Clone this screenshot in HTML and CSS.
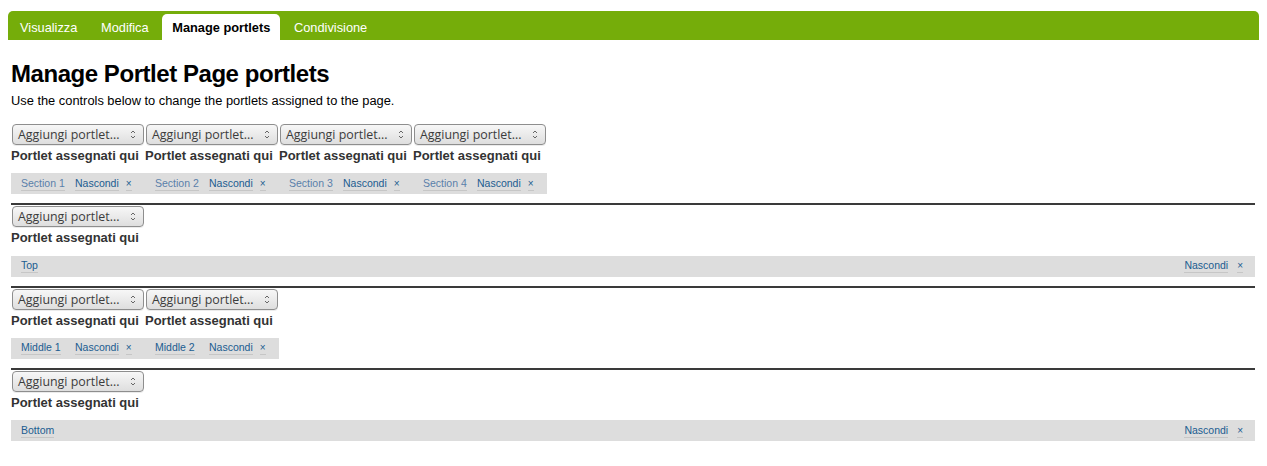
FILE: index.html
```html
<!DOCTYPE html>
<html lang="it">
<head>
<meta charset="utf-8">
<title>Manage portlets</title>
<link rel="stylesheet" href="styles.css">
</head>
<body>
<nav class="tabs">
  <a class="tab">Visualizza</a>
  <a class="tab">Modifica</a>
  <a class="tab active">Manage portlets</a>
  <a class="tab">Condivisione</a>
</nav>
<main class="content">
  <h1 class="title">Manage Portlet Page portlets</h1>
  <p class="desc">Use the controls below to change the portlets assigned to the page.</p>

  <section class="block">
    <div class="cols">
      <div class="col">
        <div class="select"><span>Aggiungi portlet...</span><svg class="arr" width="6" height="11" viewBox="0 0 6 11"><path d="M1 4 L3 2 L5 4" fill="none" stroke="#666" stroke-width="1"/><path d="M1 7 L3 9 L5 7" fill="none" stroke="#666" stroke-width="1"/></svg></div>
        <h4 class="lbl">Portlet assegnati qui</h4>
        <div class="bar"><span class="cell"><a class="name dim">Section 1</a></span><a class="act">Nascondi</a><a class="x">×</a></div>
      </div>
      <div class="col">
        <div class="select"><span>Aggiungi portlet...</span><svg class="arr" width="6" height="11" viewBox="0 0 6 11"><path d="M1 4 L3 2 L5 4" fill="none" stroke="#666" stroke-width="1"/><path d="M1 7 L3 9 L5 7" fill="none" stroke="#666" stroke-width="1"/></svg></div>
        <h4 class="lbl">Portlet assegnati qui</h4>
        <div class="bar"><span class="cell"><a class="name dim">Section 2</a></span><a class="act">Nascondi</a><a class="x">×</a></div>
      </div>
      <div class="col">
        <div class="select"><span>Aggiungi portlet...</span><svg class="arr" width="6" height="11" viewBox="0 0 6 11"><path d="M1 4 L3 2 L5 4" fill="none" stroke="#666" stroke-width="1"/><path d="M1 7 L3 9 L5 7" fill="none" stroke="#666" stroke-width="1"/></svg></div>
        <h4 class="lbl">Portlet assegnati qui</h4>
        <div class="bar"><span class="cell"><a class="name dim">Section 3</a></span><a class="act">Nascondi</a><a class="x">×</a></div>
      </div>
      <div class="col">
        <div class="select"><span>Aggiungi portlet...</span><svg class="arr" width="6" height="11" viewBox="0 0 6 11"><path d="M1 4 L3 2 L5 4" fill="none" stroke="#666" stroke-width="1"/><path d="M1 7 L3 9 L5 7" fill="none" stroke="#666" stroke-width="1"/></svg></div>
        <h4 class="lbl">Portlet assegnati qui</h4>
        <div class="bar"><span class="cell"><a class="name dim">Section 4</a></span><a class="act">Nascondi</a><a class="x">×</a></div>
      </div>
    </div>
  </section>

  <section class="block">
    <div class="col wide">
      <div class="select"><span>Aggiungi portlet...</span><svg class="arr" width="6" height="11" viewBox="0 0 6 11"><path d="M1 4 L3 2 L5 4" fill="none" stroke="#666" stroke-width="1"/><path d="M1 7 L3 9 L5 7" fill="none" stroke="#666" stroke-width="1"/></svg></div>
      <h4 class="lbl">Portlet assegnati qui</h4>
      <div class="bar full"><a class="name">Top</a><span class="spacer"></span><a class="act">Nascondi</a><a class="x">×</a></div>
    </div>
  </section>

  <section class="block">
    <div class="cols">
      <div class="col">
        <div class="select"><span>Aggiungi portlet...</span><svg class="arr" width="6" height="11" viewBox="0 0 6 11"><path d="M1 4 L3 2 L5 4" fill="none" stroke="#666" stroke-width="1"/><path d="M1 7 L3 9 L5 7" fill="none" stroke="#666" stroke-width="1"/></svg></div>
        <h4 class="lbl">Portlet assegnati qui</h4>
        <div class="bar"><span class="cell"><a class="name">Middle 1</a></span><a class="act">Nascondi</a><a class="x">×</a></div>
      </div>
      <div class="col">
        <div class="select"><span>Aggiungi portlet...</span><svg class="arr" width="6" height="11" viewBox="0 0 6 11"><path d="M1 4 L3 2 L5 4" fill="none" stroke="#666" stroke-width="1"/><path d="M1 7 L3 9 L5 7" fill="none" stroke="#666" stroke-width="1"/></svg></div>
        <h4 class="lbl">Portlet assegnati qui</h4>
        <div class="bar"><span class="cell"><a class="name">Middle 2</a></span><a class="act">Nascondi</a><a class="x">×</a></div>
      </div>
    </div>
  </section>

  <section class="block last">
    <div class="col wide">
      <div class="select"><span>Aggiungi portlet...</span><svg class="arr" width="6" height="11" viewBox="0 0 6 11"><path d="M1 4 L3 2 L5 4" fill="none" stroke="#666" stroke-width="1"/><path d="M1 7 L3 9 L5 7" fill="none" stroke="#666" stroke-width="1"/></svg></div>
      <h4 class="lbl">Portlet assegnati qui</h4>
      <div class="bar full"><a class="name">Bottom</a><span class="spacer"></span><a class="act">Nascondi</a><a class="x">×</a></div>
    </div>
  </section>
</main>
</body>
</html>
```

FILE: styles.css
```css
html, body {
  margin: 0;
  padding: 0;
  background: #fff;
}
body {
  padding: 11px 8px 8px 8px;
  font-family: "Liberation Sans", Arial, sans-serif;
  color: #000;
}
.tabs {
  display: flex;
  gap: 3.6px;
  height: 29px;
  padding-left: 2px;
  background: #75ad0a;
  border-radius: 5px 5px 0 0;
  box-sizing: border-box;
}
.tab {
  display: block;
  margin-top: 3px;
  height: 26px;
  line-height: 28px;
  padding: 0 10px;
  font-size: 12.8px;
  color: #fff;
  border-radius: 5px 5px 0 0;
  cursor: pointer;
  white-space: nowrap;
}
.tab.active {
  background: #fff;
  color: #000;
  font-weight: bold;
}
.content {
  padding: 0 4px 0 3px;
}
.title {
  margin: 19px 0 0 0;
  font-size: 24px;
  line-height: 29px;
  letter-spacing: -0.45px;
  font-weight: bold;
}
.desc {
  margin: 5px 0 0 0;
  font-size: 12.85px;
  line-height: 16px;
}
.block {
  padding-bottom: 9px;
  border-bottom: 2px solid #3a3a3a;
  margin-bottom: 1px;
}
.block:first-of-type {
  margin-top: 15px;
}
.block.last {
  border-bottom: none;
}
.cols {
  display: flex;
}
.col {
  width: 134px;
  display: flex;
  flex-direction: column;
}
.col.wide {
  width: auto;
}
.select {
  margin-left: 1px;
  width: 132px;
  height: 21px;
  box-sizing: border-box;
  border: 1px solid #8e8e8e;
  border-radius: 4px;
  background: linear-gradient(#f7f7f7, #dedede);
  display: flex;
  align-items: center;
  padding: 0 7px 0 5px;
  font-family: "Open Sans", "DejaVu Sans", sans-serif;
  font-size: 12.4px;
  color: #3c3c3c;
  box-shadow: 0 1px 0 rgba(0,0,0,0.08);
}
.select span {
  flex: 1;
  white-space: nowrap;
}
.arr {
  display: block;
}
.lbl {
  margin: 3px 0 0 0;
  font-size: 13px;
  line-height: 16px;
  font-weight: bold;
  color: #333;
  white-space: nowrap;
}
.bar {
  margin-top: 9.33px;
  height: 21px;
  background: #dddddd;
  display: flex;
  align-items: center;
  padding: 0 10px;
  font-size: 10.5px;
  white-space: nowrap;
}
.bar.full {
  padding-right: 12px;
}
.cell {
  display: flex;
  width: 54px;
  flex: none;
}
.spacer {
  flex: 1;
}
.bar a {
  line-height: 13px;
  border-bottom: 1px solid #c6c6c6;
  color: #205c90;
  cursor: pointer;
  flex: none;
}
.bar .name.dim {
  color: #5a80aa;
}
.bar .x {
  margin-left: 7px;
  font-size: 10px;
  color: #205c90;
}
.bar.full .x {
  margin-left: 9px;
}
```
